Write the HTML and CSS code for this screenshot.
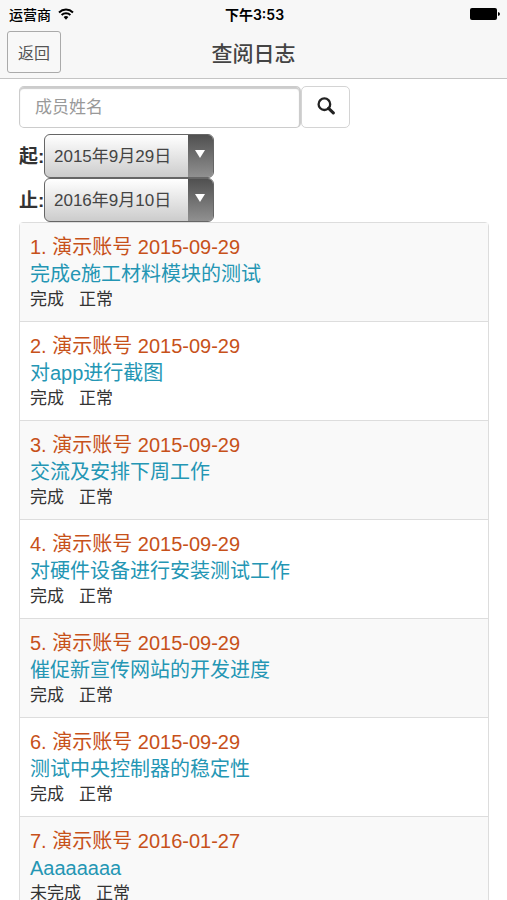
FILE: index.html
```html
<!DOCTYPE html>
<html lang="zh-CN">
<head>
<meta charset="utf-8">
<meta name="viewport" content="width=device-width, initial-scale=1">
<title>查阅日志</title>
<link rel="stylesheet" href="styles.css">
</head>
<body>
<div class="app">
  <header class="header">
    <div class="status">
      <div class="carrier">
        <span>运营商</span>
        <svg class="wifi" viewBox="0 0 16 12" aria-hidden="true">
          <path d="M1 4.4a10.2 10.2 0 0 1 14 0M3.6 7.1a6.4 6.4 0 0 1 8.8 0" fill="none" stroke="#000" stroke-width="2"/>
          <path d="M5.6 9.1a3.6 3.6 0 0 1 4.8 0L8 11.7z"/>
        </svg>
      </div>
      <time class="clock">下午3:53</time>
      <svg class="battery" viewBox="0 0 30 12" aria-hidden="true">
        <rect width="27" height="12" rx="2"/>
        <path d="M28 4q2 .4 2 2t-2 2z"/>
      </svg>
    </div>
    <div class="titlebar">
      <button class="back" type="button">返回</button>
      <h1 class="title">查阅日志</h1>
    </div>
  </header>
  <main class="content">
    <form class="filters">
      <div class="search">
        <input class="search-input" type="text" placeholder="成员姓名" aria-label="成员姓名">
        <button class="search-button" type="button" aria-label="搜索">
          <svg class="search-icon" viewBox="0 0 18 18" aria-hidden="true">
            <circle cx="7.4" cy="7.2" r="5.8" fill="none" stroke="#222" stroke-width="2.3"/>
            <path d="M11.6 11.4l4.7 4.5" stroke="#222" stroke-width="3.1" stroke-linecap="round"/>
          </svg>
        </button>
      </div>
      <div class="date-row">
        <label class="date-label" for="from">起:</label>
        <div class="picker">
          <select class="date" id="from"><option>2015年9月29日</option></select>
          <span class="arrow"></span>
        </div>
      </div>
      <div class="date-row">
        <label class="date-label" for="to">止:</label>
        <div class="picker">
          <select class="date" id="to"><option>2016年9月10日</option></select>
          <span class="arrow"></span>
        </div>
      </div>
    </form>
    <ul class="logs">
      <li class="log"><div class="author">1. 演示账号 2015-09-29</div><div class="task">完成e施工材料模块的测试</div><div class="state"><span>完成</span><span>正常</span></div></li>
      <li class="log"><div class="author">2. 演示账号 2015-09-29</div><div class="task">对app进行截图</div><div class="state"><span>完成</span><span>正常</span></div></li>
      <li class="log"><div class="author">3. 演示账号 2015-09-29</div><div class="task">交流及安排下周工作</div><div class="state"><span>完成</span><span>正常</span></div></li>
      <li class="log"><div class="author">4. 演示账号 2015-09-29</div><div class="task">对硬件设备进行安装测试工作</div><div class="state"><span>完成</span><span>正常</span></div></li>
      <li class="log"><div class="author">5. 演示账号 2015-09-29</div><div class="task">催促新宣传网站的开发进度</div><div class="state"><span>完成</span><span>正常</span></div></li>
      <li class="log"><div class="author">6. 演示账号 2015-09-29</div><div class="task">测试中央控制器的稳定性</div><div class="state"><span>完成</span><span>正常</span></div></li>
      <li class="log"><div class="author">7. 演示账号 2016-01-27</div><div class="task">Aaaaaaaa</div><div class="state"><span>未完成</span><span>正常</span></div></li>
    </ul>
  </main>
</div>
</body>
</html>
```
FILE: styles.css
```css
* {
  box-sizing: border-box;
}

body {
  margin: 0;
  background: #fff;
  color: #333;
  font-family: "Liberation Sans", "Noto Sans CJK SC", sans-serif;
}

button,
input,
select {
  margin: 0;
  font-family: inherit;
}

.app {
  display: flex;
  flex-direction: column;
  height: 100vh;
}

.header {
  flex: none;
  background: #f7f7f7;
  border-bottom: 1px solid #c4c4c4;
}

.status {
  display: grid;
  grid-template-columns: 1fr auto 1fr;
  align-items: center;
  height: 27px;
  padding: 0 7px 0 9px;
  color: #000;
  font-size: 14px;
  font-weight: 500;
}

.carrier {
  display: flex;
  align-items: center;
  gap: 7px;
}

.wifi {
  width: 16px;
  height: 12px;
}

.clock {
  font-family: Inter, "Noto Sans CJK SC", sans-serif;
  font-weight: 600;
}

.battery {
  width: 30px;
  height: 12px;
  justify-self: end;
}

.titlebar {
  display: grid;
  grid-template-columns: 1fr auto 1fr;
  align-items: center;
  height: 51px;
  padding: 0 7px 2px;
}

.back {
  justify-self: start;
  width: 54px;
  height: 42px;
  padding: 0;
  border: 1px solid #aaa;
  border-radius: 3px;
  background: #f8f8f8;
  color: #555;
  font-size: 16px;
}

.title {
  margin: 0;
  color: #444;
  font-size: 21px;
  font-weight: 500;
}

.content {
  flex: 1;
  min-height: 0;
  padding: 7px 18px 0 19px;
  overflow-y: auto;
  scrollbar-width: none;
}

.search {
  display: flex;
  width: 331px;
  max-width: 100%;
  height: 42px;
  margin-bottom: 6px;
}

.search-input {
  flex: 1;
  min-width: 0;
  padding: 2px 15px 0;
  border: 1px solid #ccc;
  border-width: 1px 2px 1px 1px;
  border-radius: 5px;
  background: #fff;
  box-shadow: inset 0 2px 1px #ccc;
  color: #555;
  font-size: 17px;
}

.search-input::placeholder {
  color: #999;
}

.search-button {
  display: grid;
  place-items: center;
  width: 49px;
  padding: 0 0 2px;
  border: 1px solid #d4d4d4;
  border-radius: 5px;
  background: #fff;
}

.search-icon {
  width: 18px;
  height: 18px;
}

.date-row {
  display: flex;
  align-items: center;
  height: 44px;
}

.date-label {
  width: 25px;
  padding-bottom: 4px;
  font-size: 19px;
  font-weight: 700;
  white-space: nowrap;
}

.picker {
  display: grid;
  grid-template-columns: 1fr 25px;
  width: 170px;
  height: 44px;
  border: 1px solid #666;
  border-radius: 6px;
  background: linear-gradient(#fff, #ccc);
  overflow: hidden;
}

.date {
  min-width: 0;
  padding: 0 0 0 9px;
  border: 0;
  background: transparent;
  color: #444;
  font-size: 17px;
  appearance: none;
}

.arrow {
  display: grid;
  justify-content: center;
  padding: 15px 2px 0 0;
  background: linear-gradient(#505050, #909090);
  pointer-events: none;
}

.arrow::before {
  content: "";
  width: 0;
  height: 0;
  border: solid transparent;
  border-width: 8px 5px 0;
  border-top-color: #fff;
}

.logs {
  margin: 0;
  padding: 0;
  border: 1px solid #ddd;
  border-radius: 4px;
  list-style: none;
}

.log {
  padding: 11px 10px 9px;
  border-bottom: 1px solid #ddd;
}

.log:nth-child(odd) {
  background: #f9f9f9;
}

.log:last-child {
  border-bottom: 0;
}

.author,
.task {
  font-size: 20px;
  line-height: 27px;
}

.author {
  color: #c7511a;
}

.task {
  color: #2496b4;
}

.state {
  display: flex;
  gap: 15px;
  font-size: 17px;
  line-height: 24px;
}
```
